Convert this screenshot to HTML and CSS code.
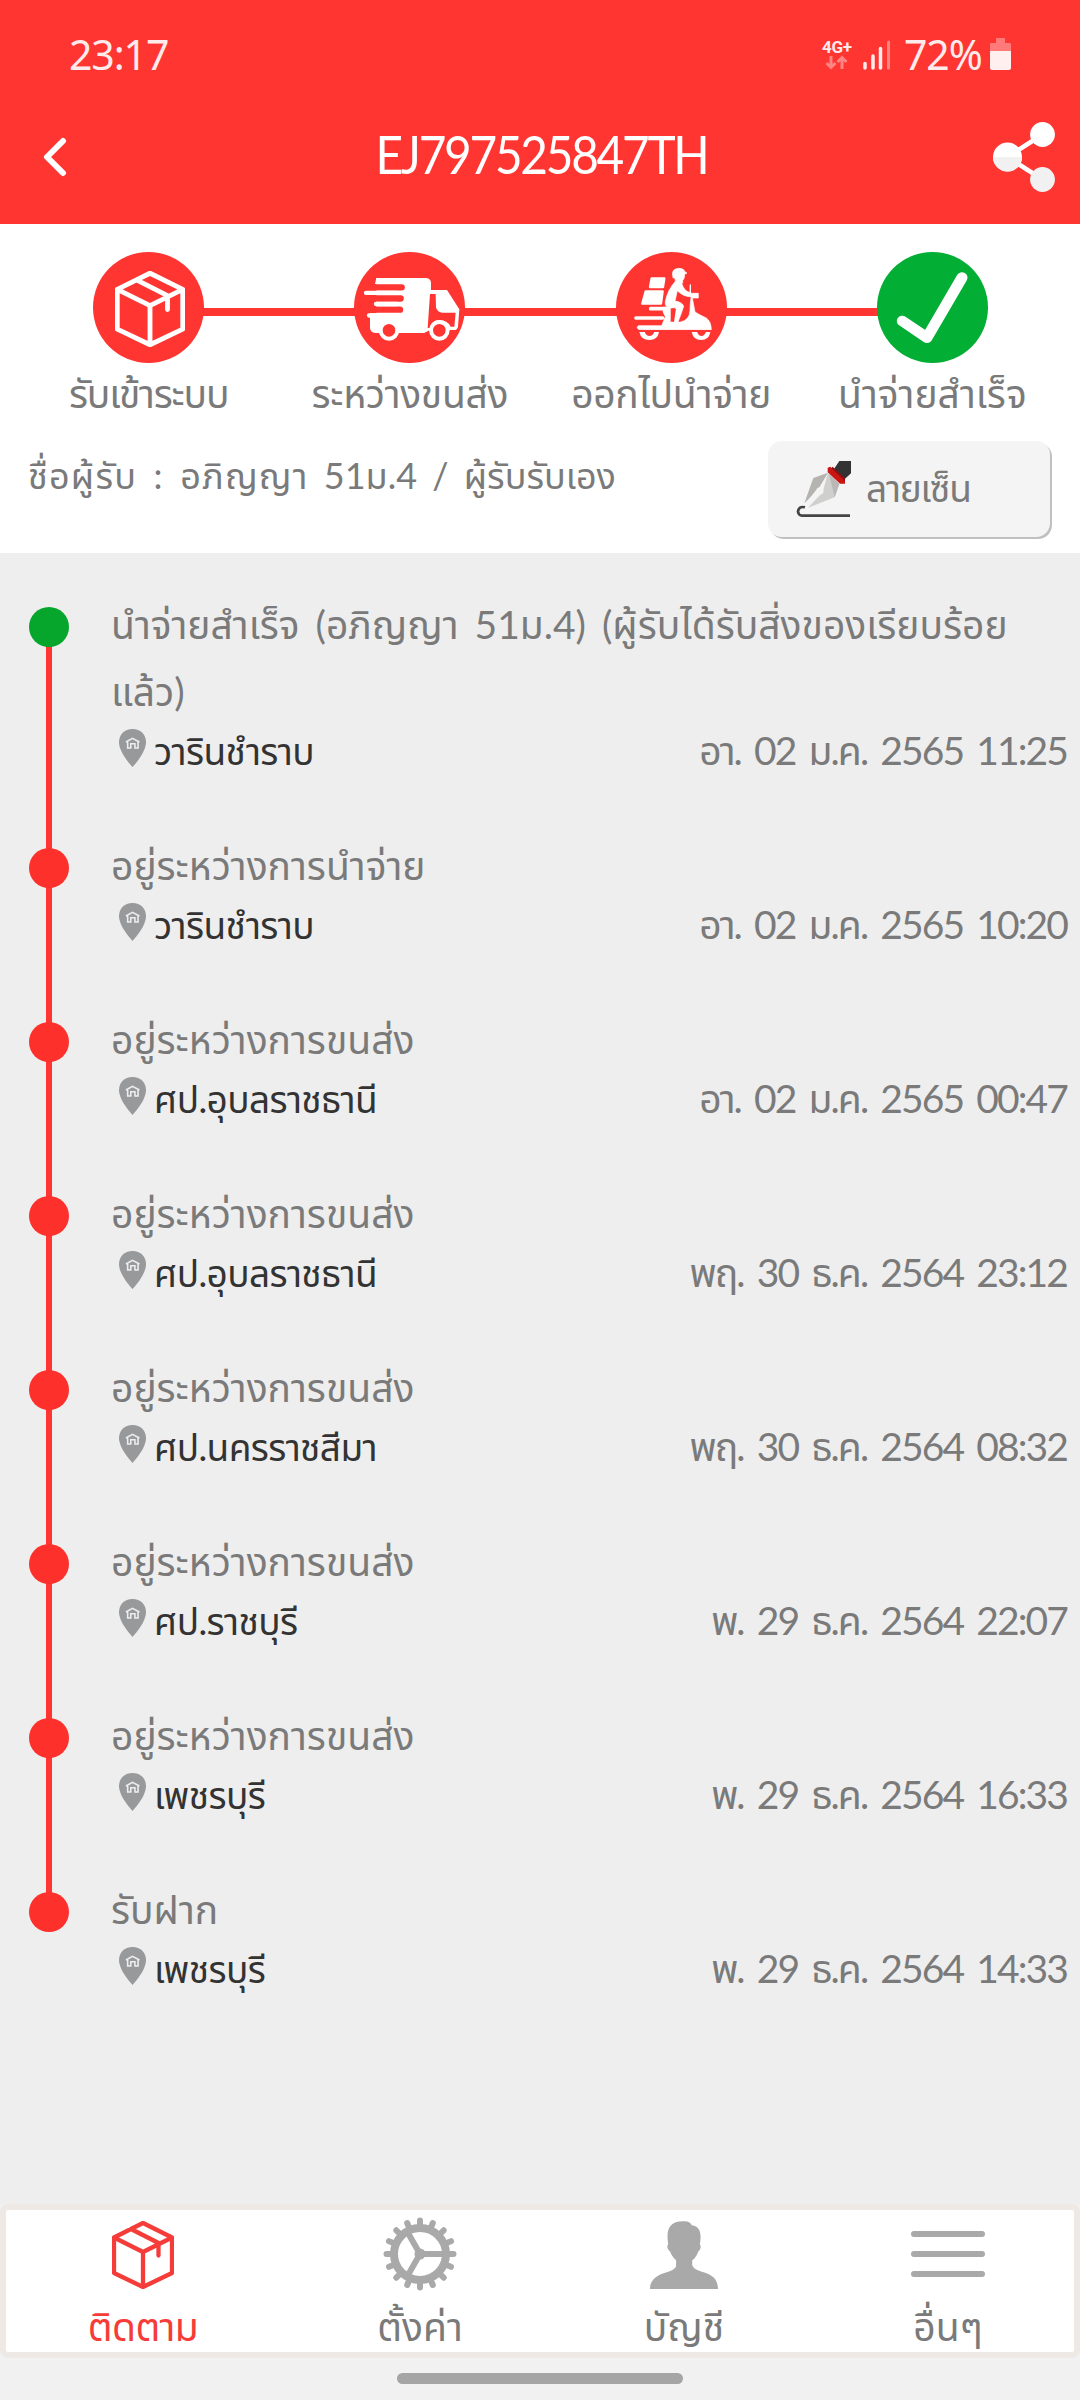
FILE: index.html
```
<!DOCTYPE html>
<html lang="th">

<head>
    <meta charset="UTF-8">
    <title>EJ797525847TH</title>
    <link rel="stylesheet" href="styles.css">
</head>

<body>
    <!-- shared icons -->
    <svg class="defs">
        <symbol id="box" viewBox="0 0 62 68" preserveAspectRatio="none">
            <path d="M31 2 60 16.500V52L31 66 2 52V16.500ZM2 16.500 31 31 60 16.500M31 31V66M19 8 46.500 22V34.500" fill="none" stroke="currentColor" stroke-width="4.300" stroke-linejoin="round" stroke-linecap="round" />
        </symbol>
        <symbol id="pin" viewBox="346 507 78 114" preserveAspectRatio="none">
            <path d="M385 507C361 507 346 524 346 547C346 573 372 607 385 621C398 607 424 573 424 547C424 524 409 507 385 507Z" fill="#98999b" />
            <path d="M366 546 385 535 405 546M371 544V566M371 564H380V551H392V564H401M401 544V566" fill="none" stroke="#eee" stroke-width="4.500" />
        </symbol>
    </svg>

    <header class="header">
        <div class="status">
            <span class="time">23:17</span>
            <div class="network">
                <span>4G+</span>
                <svg width="23" height="15" viewBox="0 0 23 15"><path d="M6 1V12M1.500 8 6 12.500 10.500 8M17 14V3M12.500 7 17 2.500 21.500 7" fill="none" stroke="#ff8583" stroke-width="3" /></svg>
            </div>
            <svg class="signal" width="28" height="30" viewBox="0 0 28 30">
                <path d="M2 23.500V28M10 16V28M17.500 8.500V28" stroke="#ffebeb" stroke-width="3.500" stroke-linecap="round" />
                <path d="M25.500 2V28" stroke="#ff8583" stroke-width="3" stroke-linecap="round" />
            </svg>
            <span class="percent">72%</span>
            <svg class="battery" width="21" height="32" viewBox="0 0 21 32">
                <path d="M6 0H15V5H20Q21 5 21 6V13H0V6Q0 5 1 5H6Z" fill="#ff7a78" />
                <path d="M0 13H21V30Q21 32 19 32H2Q0 32 0 30Z" fill="#ffefef" />
            </svg>
        </div>
        <div class="bar">
            <svg class="back" width="24" height="40" viewBox="0 0 24 40"><path d="M20 4 4 20 20 36" fill="none" stroke="#fff" stroke-width="6" stroke-linecap="round" stroke-linejoin="round" /></svg>
            <h1>EJ797525847TH</h1>
            <svg class="share" width="62" height="70" viewBox="0 0 62 70">
                <path d="M49.500 12.500 14.500 35 49.500 57.500" fill="none" stroke="#fff" stroke-width="4.500" />
                <ellipse cx="49.500" cy="12.500" rx="12.400" ry="12.500" fill="#fff" />
                <circle cx="14.500" cy="35" r="14.500" fill="#fff" />
                <path d="M0 35A14.500 14.500 0 0 0 29 35Z" fill="#f1f1f1" />
                <ellipse cx="49.500" cy="57.500" rx="12.400" ry="12.500" fill="#f1f1f1" />
            </svg>
        </div>
    </header>

    <section class="summary">
        <ul class="steps">
            <li>
                <div class="circle"><svg class="parcel" width="70" height="76"><use href="#box" /></svg></div>
                <span class="s1">รับเข้าระบบ</span>
            </li>
            <li>
                <div class="circle">
                    <svg width="120" height="120" viewBox="0 0 360 360">
                        <g fill="#fff">
                            <path d="M79 90H228Q243 91 243 106V126H291L328 184 324 236Q322 246 312 246H240L222 255H76Q61 254 60 240V196H79Z" />
                            <path d="M57 196H130V209H57A6 6 0 0 1 57 196Z" />
                        </g>
                        <path d="M55 118H155M40 151.500H152M40 185H150" stroke="#ff3532" stroke-width="19" stroke-linecap="round" />
                        <path d="M48 134.500H140M78 168H140" stroke="#fff" stroke-width="13" stroke-linecap="round" />
                        <path d="M79 90 75 108H90V90Z" fill="#fff" />
                        <path d="M240 138H257L258 178Q261 193 276 194H317L313 236H302Q292 216 268 216 245 217 240 240H233Z" fill="#ff3532" />
                        <g fill="#ff3532" stroke="#fff" stroke-width="12">
                            <circle cx="117" cy="247" r="25" />
                            <circle cx="268" cy="247" r="25" />
                        </g>
                    </svg>
                </div>
                <span class="s2">ระหว่างขนส่ง</span>
            </li>
            <li>
                <div class="circle">
                    <svg width="120" height="120" viewBox="0 0 360 360">
                        <g fill="#fff" stroke="#fff" stroke-linejoin="round" stroke-linecap="round">
                            <path d="M122 91H160L156 117H117ZM104 130H155L150 167H94Z" stroke-width="7" />
                            <path d="M186 88Q178 63 203 61 219 61 222 72L228 75 221 79Q221 92 215 98V105L194 103Q195 94 186 88Z" stroke-width="2" />
                            <path d="M193 100Q170 126 163 160 160 180 180 180L194 179Q188 198 180 224H200Q212 195 218 175 215 163 192 159L199 128Q216 146 240 146V134Q219 132 212 105Z" stroke-width="2" />
                            <path d="M238 136H262V150H244L252 192Q268 202 286 210 300 220 301 245H84Q74 239 82 233H152L163 206Q152 190 158 178H178V222H208Q236 216 237 188 237 168 240 150Z" stroke-width="2" />
                            <path d="M119 182H165M75 210H155" stroke-width="11" />
                            <path d="M238 111V136" stroke-width="4" />
                        </g>
                        <path d="M190 182 184 221" stroke="#ff3532" stroke-width="10" />
                        <path d="M85 252H144Q140 276 115 276 90 276 85 252ZM242 252H298Q294 276 270 276 247 276 242 252Z" fill="#fff" />
                        <path d="M101 251Q106 264 115 264 125 264 130 251ZM258 251Q263 264 271 264 280 264 285 251ZM70 247H305V251H70Z" fill="#ff3532" />
                    </svg>
                </div>
                <span class="s3">ออกไปนำจ่าย</span>
            </li>
            <li>
                <div class="circle done">
                    <svg width="111" height="111" viewBox="979 96 320 333" preserveAspectRatio="none"><path d="M1052 303 1123 353 1224 173" fill="none" stroke="#fff" stroke-width="32" stroke-linecap="round" stroke-linejoin="round" /></svg>
                </div>
                <span class="s4">นำจ่ายสำเร็จ</span>
            </li>
        </ul>
        <div class="receiver">
            <p><span class="wide">ชื่อผู้รับ : อภิญญา</span> 51ม.4 / ผู้รับรับเอง</p>
            <button class="sign">
                <svg width="90" height="90" viewBox="0 0 270 270">
                    <path d="M178 36H213V73L192 92 162 60Z" fill="#333" />
                    <path d="M151 53 195 92V104H180L143 70V56Z" fill="#cb1512" />
                    <path d="M158 53 195 88V97L154 58Z" fill="#8f1010" />
                    <path d="M144 71 100 87 73 163 112 125Z" fill="#b5b3af" />
                    <path d="M144 71 178 105 164 145 84 176 128 130Z" fill="#cfcfce" />
                    <path d="M147 74 178 105 164 145Z" fill="#b9b8b7" />
                    <path d="M108 124Q112 112 124 115 134 122 129 133 122 140 114 138L83 173 75 165Z" fill="#f4f4f4" />
                    <path d="M75 175Q56 170 54 188 56 199 66 200H210" fill="none" stroke="#444" stroke-width="8" />
                </svg>
                <span>ลายเซ็น</span>
            </button>
        </div>
    </section>

    <ul class="timeline">
        <li class="now">
            <p class="title">นำจ่ายสำเร็จ (อภิญญา 51ม.4) (ผู้รับได้รับสิ่งของเรียบร้อย<br>แล้ว)</p>
            <div class="place"><svg><use href="#pin" /></svg><span>วารินชำราบ</span><time>อา. 02 ม.ค. 2565 11:25</time></div>
        </li>
        <li>
            <p class="title">อยู่ระหว่างการนำจ่าย</p>
            <div class="place"><svg><use href="#pin" /></svg><span>วารินชำราบ</span><time>อา. 02 ม.ค. 2565 10:20</time></div>
        </li>
        <li>
            <p class="title">อยู่ระหว่างการขนส่ง</p>
            <div class="place"><svg><use href="#pin" /></svg><span>ศป.อุบลราชธานี</span><time>อา. 02 ม.ค. 2565 00:47</time></div>
        </li>
        <li>
            <p class="title">อยู่ระหว่างการขนส่ง</p>
            <div class="place"><svg><use href="#pin" /></svg><span>ศป.อุบลราชธานี</span><time>พฤ. 30 ธ.ค. 2564 23:12</time></div>
        </li>
        <li>
            <p class="title">อยู่ระหว่างการขนส่ง</p>
            <div class="place"><svg><use href="#pin" /></svg><span>ศป.นครราชสีมา</span><time>พฤ. 30 ธ.ค. 2564 08:32</time></div>
        </li>
        <li>
            <p class="title">อยู่ระหว่างการขนส่ง</p>
            <div class="place"><svg><use href="#pin" /></svg><span>ศป.ราชบุรี</span><time>พ. 29 ธ.ค. 2564 22:07</time></div>
        </li>
        <li>
            <p class="title">อยู่ระหว่างการขนส่ง</p>
            <div class="place"><svg><use href="#pin" /></svg><span>เพชรบุรี</span><time>พ. 29 ธ.ค. 2564 16:33</time></div>
        </li>
        <li>
            <p class="title">รับฝาก</p>
            <div class="place"><svg><use href="#pin" /></svg><span>เพชรบุรี</span><time>พ. 29 ธ.ค. 2564 14:33</time></div>
        </li>
    </ul>

    <nav class="tabs">
        <a class="active">
            <svg width="62" height="68"><use href="#box" /></svg>
            <span>ติดตาม</span>
        </a>
        <a>
            <svg width="74" height="74" viewBox="-37 -37 74 74" fill="none" stroke="#a9a9a9">
                <circle r="26" stroke-width="8" />
                <path d="M28 0H33.500M25.900 10.700 31 12.800M19.800 19.800 23.700 23.700M10.700 25.900 12.800 31M0 28V33.500M-10.700 25.900-12.800 31M-19.800 19.800-23.700 23.700M-25.900 10.700-31 12.800M-28 0H-33.500M-25.900-10.700-31-12.800M-19.800-19.800-23.700-23.700M-10.700-25.900-12.800-31M0-28V-33.500M10.700-25.900 12.800-31M19.800-19.800 23.700-23.700M25.900-10.700 31-12.800" stroke-width="6" stroke-linecap="round" />
                <path d="M0 0H24M0 0-12-21M0 0-12 21" stroke-width="6" />
                <circle r="5.500" fill="#a9a9a9" stroke="none" />
            </svg>
            <span>ตั้งค่า</span>
        </a>
        <a>
            <svg width="68" height="68" viewBox="319 120 198 204" preserveAspectRatio="none"><path d="M319 324C319 292 345 280 370 273 388 266 395 262 395 252V238C388 232 380 220 378 212 370 207 367 195 372 190 366 150 372 121 415 121 430 120 436 124 441 133 465 135 470 160 464 190 469 195 466 208 459 212 457 222 448 234 442 238V252C445 264 460 269 475 274 500 282 517 294 517 324Z" fill="#a9a9a9" /></svg>
            <span>บัญชี</span>
        </a>
        <a>
            <svg width="74" height="46" viewBox="0 0 74 46"><path d="M3 3H71M3 23H71M3 43H71" stroke="#a9a9a9" stroke-width="6" stroke-linecap="round" /></svg>
            <span>อื่นๆ</span>
        </a>
    </nav>
    <div class="home"></div>
</body>

</html>
```
FILE: styles.css
```
* {
    margin: 0;
    padding: 0;
    box-sizing: border-box;
}

body {
    width: 1080px;
    height: 2400px;
    display: flex;
    flex-direction: column;
    background: #f1f1f1;
    color: #7a7a7a;
    font-family: Lato, "Noto Sans Thai", sans-serif;
    font-size: 39px;
    white-space: nowrap;
    overflow: hidden;
}

ul {
    list-style: none;
}

svg {
    display: block;
    flex: none;
}

.defs {
    position: absolute;
    width: 0;
    height: 0;
}

/* header */
.header {
    height: 224px;
    background: #ff3532;
    color: #fff;
}

.status {
    display: flex;
    height: 90px;
    padding: 26px 69px 0 69px;
    color: #ffebeb;
    font-family: "Noto Sans", sans-serif;
    font-size: 41px;
    line-height: 56px;
    letter-spacing: -1.1px;
}

.network {
    margin: 13px 11px 0 auto;
    width: 30px;
    font: bold 17px/17px Roboto, sans-serif;
    letter-spacing: -0.3px;
}

.network svg {
    margin: -1px 0 0 3px;
}

.signal {
    margin-top: 14px;
}

.percent {
    width: 84px;
    margin-left: 13px;
}

.battery {
    margin: 12px 0 0 2px;
}

.bar {
    display: flex;
    align-items: center;
    justify-content: space-between;
    height: 134px;
    padding: 0 25px 0 43px;
}

.bar h1 {
    margin: 0 0 7px 22px;
    font-size: 53px;
    font-weight: 400;
    letter-spacing: -2.5px;
    transform: scaleX(0.9);
}

/* steps */
.summary {
    height: 329px;
    background: #fff;
}

.steps {
    display: flex;
    padding: 28px 17px 0 18px;
}

.steps li {
    position: relative;
    flex: 1;
    display: flex;
    flex-direction: column;
    align-items: center;
    line-height: 60px;
}

.steps li + li::before {
    content: "";
    position: absolute;
    top: 56px;
    right: 50%;
    width: 100%;
    height: 8px;
    background: #ff3532;
}

.circle {
    position: relative;
    z-index: 1;
    width: 111px;
    height: 111px;
    display: flex;
    align-items: center;
    justify-content: center;
    border-radius: 50%;
    background: #ff3532;
    color: #fff;
}

.parcel {
    margin: 3px 0 0 3px;
}

.s1 {
    letter-spacing: -1.2px;
}

.s2,
.s3 {
    letter-spacing: -0.3px;
}

.done {
    background: #02ae34;
}

.receiver {
    display: flex;
    justify-content: space-between;
    padding: 18px 30px 0 28px;
}

.receiver p {
    font-size: 36px;
    line-height: 68px;
    word-spacing: 6px;
}

.wide {
    letter-spacing: 1.2px;
}

.sign {
    display: flex;
    width: 282px;
    height: 96px;
    border: 0;
    border-radius: 14px;
    background: #f4f4f4;
    box-shadow: 2px 2px 0 #c0c0c0;
    color: #7a7a7a;
    font: inherit;
    font-size: 37px;
    letter-spacing: -1.2px;
    line-height: 94px;
}

.sign svg {
    margin: 8px -4px 0 12px;
}

/* timeline */
.timeline {
    flex: 1;
    padding-top: 37px;
    background: #eee;
}

.timeline li {
    position: relative;
    padding: 0 13px 59px 111px;
}

.timeline li::before {
    content: "";
    position: absolute;
    left: 46px;
    top: 37px;
    width: 6px;
    height: 100%;
    background: #ff3532;
}

.timeline li:last-child::before {
    display: none;
}

.timeline li::after {
    content: "";
    position: absolute;
    left: 29px;
    top: 17px;
    width: 40px;
    height: 40px;
    border-radius: 50%;
    background: #fe302b;
    z-index: 1;
}

.timeline .now::after {
    background: #06a52c;
}

.title {
    padding-top: 1px;
    line-height: 67px;
    word-spacing: 6px;
}

.place {
    display: flex;
    margin-top: 3px;
    padding-left: 8px;
    height: 44px;
    line-height: 45px;
}

.place svg {
    width: 27px;
    height: 38px;
    margin: 1px 8px 0 0;
}

.place span {
    color: #333;
    font-size: 37px;
    letter-spacing: -0.6px;
}

.place time {
    margin-left: auto;
    letter-spacing: -1.9px;
    word-spacing: 5px;
}

/* tabs */
.tabs {
    display: flex;
    height: 154px;
    padding-left: 11px;
    border: 6px solid #eee9e5;
    border-radius: 8px;
    background: #fff;
}

.tabs a {
    width: 252px;
    display: flex;
    flex-direction: column;
    align-items: center;
    justify-content: space-between;
}

.tabs a:nth-child(2) {
    margin-left: 25px;
}

.tabs a:nth-child(3) {
    margin-left: 12px;
}

.tabs a:nth-child(4) {
    margin-left: 12px;
}

.tabs a svg {
    margin-top: 11px;
}

.tabs a:nth-child(2) svg {
    margin-top: 7px;
}

.tabs a:nth-child(4) svg {
    margin-top: 21px;
}

.tabs span {
    height: 52px;
    line-height: 52px;
}

.tabs .active {
    color: #f63c38;
    letter-spacing: -0.6px;
}

.home {
    width: 286px;
    height: 11px;
    margin: 15px auto 16px;
    border-radius: 6px;
    background: #a5a5a5;
}
```
